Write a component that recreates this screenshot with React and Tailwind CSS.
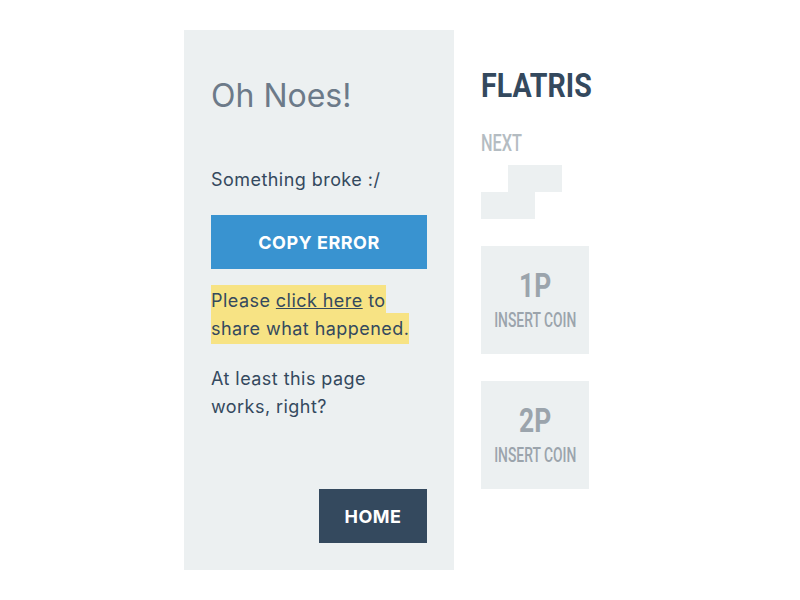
export default function App() {
  const narrow = { fontFamily: 'Roboto, "Noto Sans", sans-serif' };

  return (
    <div className="min-h-screen bg-white flex items-center justify-center" style={{ fontFamily: 'Inter, "Noto Sans", sans-serif' }}>
      <div className="w-[432px] h-[540px] flex">
        <div className="w-[270px] h-full bg-[#ecf0f1] p-[27px] flex flex-col">
          <h1 className="mt-[19px] text-[32px] leading-[40px] text-[#6c7a89]">Oh Noes!</h1>
          <p className="mt-[50px] text-[18px] leading-[28px] tracking-[0.45px] text-[#34495e]">Something broke :/</p>
          <button className="mt-[21px] h-[54px] w-full bg-[#3993d0] text-white text-[18px] tracking-[0.5px] font-bold uppercase">
            Copy error
          </button>
          <p className="mt-[18px] text-[18px] leading-[28px] tracking-[0.45px] text-[#34495e]">
            <span className="bg-[#f7e384] py-[5px] [box-decoration-break:clone]">
              Please <a className="underline cursor-pointer">click here</a> to share what happened.
            </span>
          </p>
          <p className="mt-[22px] text-[18px] leading-[28px] tracking-[0.45px] text-[#34495e]">At least this page works, right?</p>
          <button className="mt-auto self-end w-[108px] h-[54px] bg-[#34495e] text-white text-[18px] tracking-[0.5px] font-bold uppercase">
            Home
          </button>
        </div>

        <div className="ml-[27px] w-[108px] flex flex-col" style={narrow}>
          <h2 className="mt-[38px] text-[34px] leading-none font-bold text-[#34495e] whitespace-nowrap">
            <span className="inline-block origin-left scale-x-[0.84]">FLATRIS</span>
          </h2>
          <div className="mt-[29px] text-[24px] leading-none font-medium text-[#b4bcc2]">
            <span className="inline-block origin-left scale-x-[0.68]">NEXT</span>
          </div>
          <div className="mt-[10px] flex flex-col">
            <div className="flex pl-[27px]">
              <div className="w-[54px] h-[27px] bg-[#ecf0f1]" />
            </div>
            <div className="flex">
              <div className="w-[54px] h-[27px] bg-[#ecf0f1]" />
            </div>
          </div>
          {["1P", "2P"].map((p) => (
            <div key={p} className="mt-[27px] w-[108px] h-[108px] bg-[#ecf0f1] flex flex-col items-center justify-center text-[#9ba4ac]">
              <div className="text-[33px] leading-none font-bold">
                <span className="inline-block scale-x-[0.8]">{p}</span>
              </div>
              <div className="mt-[8px] text-[21px] leading-none font-medium whitespace-nowrap">
                <span className="inline-block scale-x-[0.66]">INSERT COIN</span>
              </div>
            </div>
          ))}
        </div>
      </div>
    </div>
  );
}
